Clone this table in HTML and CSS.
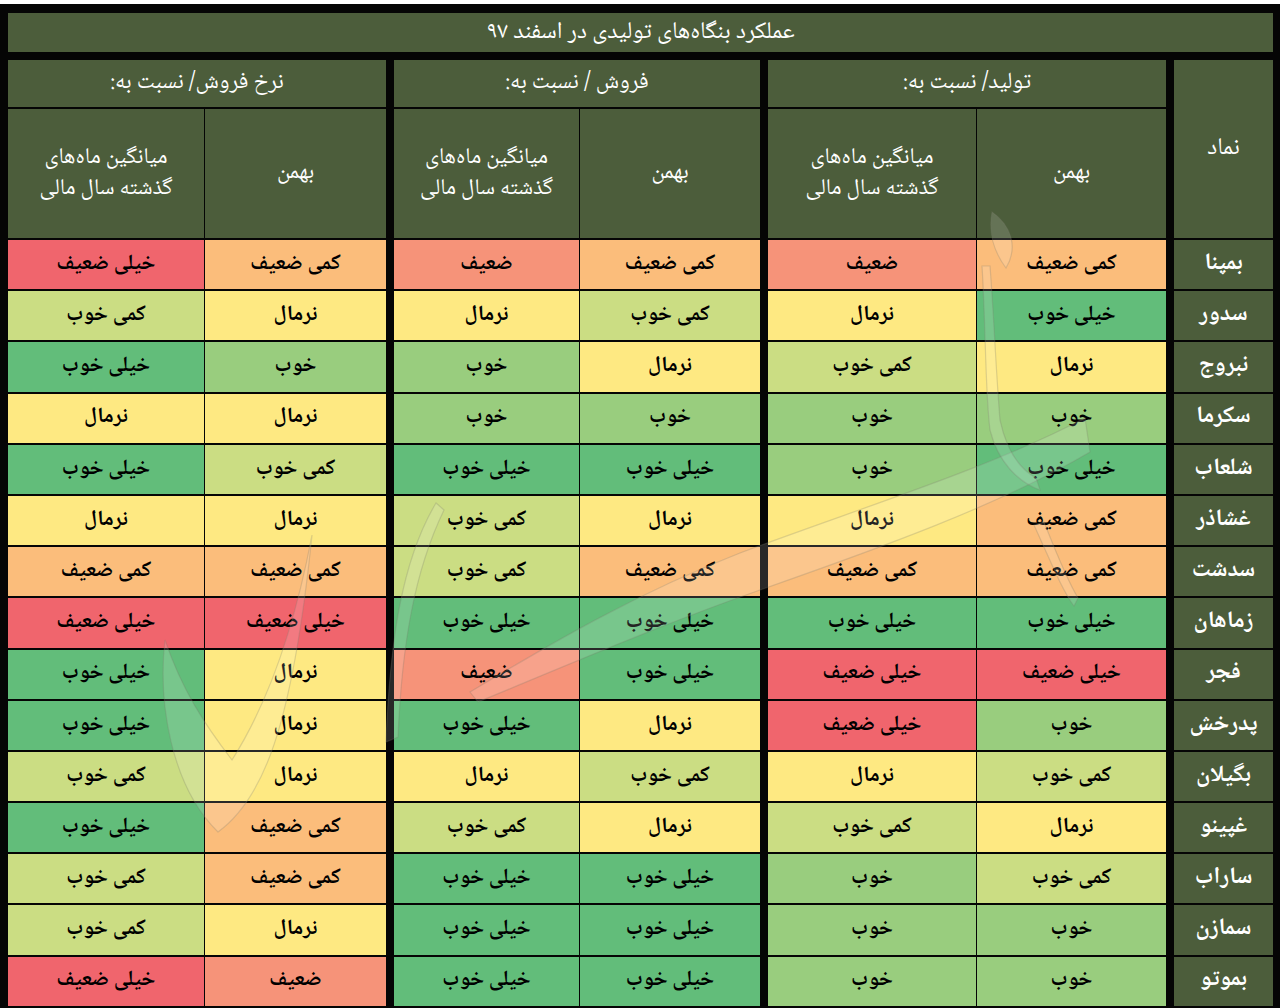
FILE: index.html
```html
<!DOCTYPE html>
<html lang="fa" dir="rtl">
<head>
<meta charset="utf-8">
<title>عملکرد بنگاه‌های تولیدی در اسفند ۹۷</title>
<link rel="stylesheet" href="styles.css">
</head>
<body>
<div class="sheet">
  <div class="title">عملکرد بنگاه‌های تولیدی در اسفند ۹۷</div>
  <div class="grid">
    <div class="h-sym">نماد</div>
    <div class="sp"></div>
    <div class="h-group">تولید/ نسبت به:</div>
    <div class="sp"></div>
    <div class="h-group">فروش / نسبت به:</div>
    <div class="sp"></div>
    <div class="h-group">نرخ فروش/ نسبت به:</div>

    <div class="sp"></div>
    <div class="h-sub">بهمن</div>
    <div class="h-sub"><span class="ln">میانگین ماه‌های</span><span class="ln">گذشته سال مالی</span></div>
    <div class="sp"></div>
    <div class="h-sub">بهمن</div>
    <div class="h-sub"><span class="ln">میانگین ماه‌های</span><span class="ln">گذشته سال مالی</span></div>
    <div class="sp"></div>
    <div class="h-sub">بهمن</div>
    <div class="h-sub"><span class="ln">میانگین ماه‌های</span><span class="ln">گذشته سال مالی</span></div>

    <div class="sym">بمپنا</div><div class="sp"></div>
    <div class="c v3">کمی ضعیف</div><div class="c v2">ضعیف</div><div class="sp"></div>
    <div class="c v3">کمی ضعیف</div><div class="c v2">ضعیف</div><div class="sp"></div>
    <div class="c v3">کمی ضعیف</div><div class="c v1">خیلی ضعیف</div>

    <div class="sym">سدور</div><div class="sp"></div>
    <div class="c v7">خیلی خوب</div><div class="c v4">نرمال</div><div class="sp"></div>
    <div class="c v5">کمی خوب</div><div class="c v4">نرمال</div><div class="sp"></div>
    <div class="c v4">نرمال</div><div class="c v5">کمی خوب</div>

    <div class="sym">نبروج</div><div class="sp"></div>
    <div class="c v4">نرمال</div><div class="c v5">کمی خوب</div><div class="sp"></div>
    <div class="c v4">نرمال</div><div class="c v6">خوب</div><div class="sp"></div>
    <div class="c v6">خوب</div><div class="c v7">خیلی خوب</div>

    <div class="sym">سکرما</div><div class="sp"></div>
    <div class="c v6">خوب</div><div class="c v6">خوب</div><div class="sp"></div>
    <div class="c v6">خوب</div><div class="c v6">خوب</div><div class="sp"></div>
    <div class="c v4">نرمال</div><div class="c v4">نرمال</div>

    <div class="sym">شلعاب</div><div class="sp"></div>
    <div class="c v7">خیلی خوب</div><div class="c v6">خوب</div><div class="sp"></div>
    <div class="c v7">خیلی خوب</div><div class="c v7">خیلی خوب</div><div class="sp"></div>
    <div class="c v5">کمی خوب</div><div class="c v7">خیلی خوب</div>

    <div class="sym">غشاذر</div><div class="sp"></div>
    <div class="c v3">کمی ضعیف</div><div class="c v4">نرمال</div><div class="sp"></div>
    <div class="c v4">نرمال</div><div class="c v5">کمی خوب</div><div class="sp"></div>
    <div class="c v4">نرمال</div><div class="c v4">نرمال</div>

    <div class="sym">سدشت</div><div class="sp"></div>
    <div class="c v3">کمی ضعیف</div><div class="c v3">کمی ضعیف</div><div class="sp"></div>
    <div class="c v3">کمی ضعیف</div><div class="c v5">کمی خوب</div><div class="sp"></div>
    <div class="c v3">کمی ضعیف</div><div class="c v3">کمی ضعیف</div>

    <div class="sym">زماهان</div><div class="sp"></div>
    <div class="c v7">خیلی خوب</div><div class="c v7">خیلی خوب</div><div class="sp"></div>
    <div class="c v7">خیلی خوب</div><div class="c v7">خیلی خوب</div><div class="sp"></div>
    <div class="c v1">خیلی ضعیف</div><div class="c v1">خیلی ضعیف</div>

    <div class="sym">فجر</div><div class="sp"></div>
    <div class="c v1">خیلی ضعیف</div><div class="c v1">خیلی ضعیف</div><div class="sp"></div>
    <div class="c v7">خیلی خوب</div><div class="c v2">ضعیف</div><div class="sp"></div>
    <div class="c v4">نرمال</div><div class="c v7">خیلی خوب</div>

    <div class="sym">پدرخش</div><div class="sp"></div>
    <div class="c v6">خوب</div><div class="c v1">خیلی ضعیف</div><div class="sp"></div>
    <div class="c v4">نرمال</div><div class="c v7">خیلی خوب</div><div class="sp"></div>
    <div class="c v4">نرمال</div><div class="c v7">خیلی خوب</div>

    <div class="sym">بگیلان</div><div class="sp"></div>
    <div class="c v5">کمی خوب</div><div class="c v4">نرمال</div><div class="sp"></div>
    <div class="c v5">کمی خوب</div><div class="c v4">نرمال</div><div class="sp"></div>
    <div class="c v4">نرمال</div><div class="c v5">کمی خوب</div>

    <div class="sym">غپینو</div><div class="sp"></div>
    <div class="c v4">نرمال</div><div class="c v5">کمی خوب</div><div class="sp"></div>
    <div class="c v4">نرمال</div><div class="c v5">کمی خوب</div><div class="sp"></div>
    <div class="c v3">کمی ضعیف</div><div class="c v7">خیلی خوب</div>

    <div class="sym">ساراب</div><div class="sp"></div>
    <div class="c v5">کمی خوب</div><div class="c v6">خوب</div><div class="sp"></div>
    <div class="c v7">خیلی خوب</div><div class="c v7">خیلی خوب</div><div class="sp"></div>
    <div class="c v3">کمی ضعیف</div><div class="c v5">کمی خوب</div>

    <div class="sym">سمازن</div><div class="sp"></div>
    <div class="c v6">خوب</div><div class="c v6">خوب</div><div class="sp"></div>
    <div class="c v7">خیلی خوب</div><div class="c v7">خیلی خوب</div><div class="sp"></div>
    <div class="c v4">نرمال</div><div class="c v5">کمی خوب</div>

    <div class="sym">بموتو</div><div class="sp"></div>
    <div class="c v6">خوب</div><div class="c v6">خوب</div><div class="sp"></div>
    <div class="c v7">خیلی خوب</div><div class="c v7">خیلی خوب</div><div class="sp"></div>
    <div class="c v2">ضعیف</div><div class="c v1">خیلی ضعیف</div>
  </div>
  <svg class="watermark" width="1280" height="1008" viewBox="0 0 1280 1008" aria-hidden="true">
    <g fill="#ffffff" fill-opacity="0.14" stroke="#7a7a6a" stroke-opacity="0.25" stroke-width="1.2">
      <path d="M1085 418 C 990 468, 860 508, 740 553 C 640 592, 560 638, 470 692 L 478 702 C 580 660, 660 625, 760 590 C 880 548, 1000 505, 1090 452 Z"/>
      <path d="M165 640 C 158 700, 170 785, 218 832 C 262 800, 292 730, 312 535 C 296 620, 270 700, 232 760 C 205 725, 182 690, 165 640 Z"/>
      <path d="M436 503 C 402 560, 390 640, 386 742 L 398 737 C 402 645, 414 572, 444 510 Z"/>
      <path d="M982 266 C 986 330, 985 390, 990 430 C 998 462, 1018 482, 1040 490 L 1036 478 C 1018 468, 1006 448, 1000 420 C 996 372, 994 318, 990 266 Z"/>
      <path d="M992 212 C 1012 226, 1018 248, 1006 268 C 994 252, 988 232, 992 212 Z"/>
      <path d="M1034 525 C 1050 560, 1062 590, 1074 606 L 1078 598 C 1066 578, 1056 552, 1044 522 Z"/>
    </g>
  </svg>
</div>
</body>
</html>
```

FILE: styles.css
```css
html, body {
  margin: 0;
  padding: 0;
  background: #ffffff;
}

body {
  font-family: "Noto Naskh Arabic", "Noto Sans Arabic", "DejaVu Sans", sans-serif;
}

.sheet {
  position: relative;
  margin-top: 4px;
  width: 1280px;
  height: 1004px;
  box-sizing: border-box;
  background: #050505;
  padding: 9px 7px 2px 8px;
  direction: rtl;
}

.title {
  height: 39px;
  margin-bottom: 8px;
  background: #4c5d3b;
  color: #ffffff;
  font-size: 24px;
  line-height: 1;
  display: flex;
  align-items: center;
  justify-content: center;
}

.grid {
  display: grid;
  direction: rtl;
  grid-template-columns: 99px 6px 189px 208px 6px 180px 185px 6px 181px 196px;
  grid-template-rows: 47px 129px;
  grid-auto-rows: 49.2px;
  column-gap: 1px;
  row-gap: 2px;
}

.h-sym,
.h-group,
.h-sub,
.sym {
  background: #4c5d3b;
  color: #ffffff;
  display: flex;
  align-items: center;
  justify-content: center;
  text-align: center;
  line-height: 1;
}

.h-sub {
  flex-direction: column;
  font-size: 22.5px;
}

.h-sym {
  grid-row: span 2;
  font-size: 24px;
}

.h-group {
  grid-column: span 2;
  font-size: 23px;
}

.ln {
  display: block;
  line-height: 31px;
}

.sym {
  font-size: 23.5px;
  font-weight: bold;
}

.c {
  display: flex;
  align-items: center;
  justify-content: center;
  color: #000000;
  font-size: 21.5px;
  font-weight: bold;
  line-height: 1;
}

.v1 { background: #f0656d; }
.v2 { background: #f69379; }
.v3 { background: #fbbd7b; }
.v4 { background: #fee982; }
.v5 { background: #cbdd83; }
.v6 { background: #99cd7e; }
.v7 { background: #62bd7a; }

.watermark {
  position: absolute;
  top: -4px;
  left: 0;
  pointer-events: none;
}
```
